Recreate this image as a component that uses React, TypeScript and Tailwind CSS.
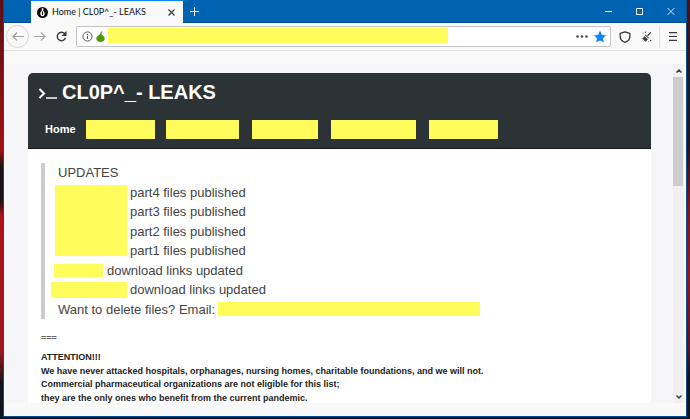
import { clsx } from 'clsx'

const navItems = [
  { label: 'Section 1', className: 'ml-[10px] w-[69px]' },
  { label: 'Section 2', className: 'ml-[11px] w-[73px]' },
  { label: 'Section 3', className: 'ml-[13px] w-[66px]' },
  { label: 'Section 4', className: 'ml-[13px] w-[85px]' },
  { label: 'Section 5', className: 'ml-[13px] w-[69px]' },
]

const parts = ['part4', 'part3', 'part2', 'part1']

const statement = [
  'ATTENTION!!!',
  'We have never attacked hospitals, orphanages, nursing homes, charitable foundations, and we will not.',
  'Commercial pharmaceutical organizations are not eligible for this list;',
  'they are the only ones who benefit from the current pandemic.',
]

function Redacted({ className }: { className: string }) {
  return <span className={clsx('block shrink-0 bg-[#fffc5c]', className)} />
}

function TitleBar() {
  return (
    <div className="flex h-[23px] shrink-0 items-stretch border-b border-[#004a8f] bg-[#0063b1] pl-[27px]">
      <div className="-mb-px flex w-[152px] items-center border-t border-[#0a84ff] bg-[#f9f9fa] pl-[6px] pr-[7px]">
        <svg className="size-[11px] shrink-0" viewBox="0 0 11 11" aria-hidden="true">
          <circle cx="5.5" cy="5.5" r="5.5" fill="#0c0c0d" />
          <path d="M4.7 1.300h1.600v2.600c1 .6 1.400 1.500 1.400 2.700C7.700 8.200 6.700 9.200 5.500 9.200S3.300 8.200 3.300 6.600c0-1.200.4-2.100 1.400-2.700z" fill="#fff" />
          <path d="M5.500 4.500v3.500" stroke="#0c0c0d" strokeWidth="1" />
        </svg>
        <span className="ml-1 flex-1 whitespace-nowrap font-[Lato,sans-serif] text-[9px] leading-[14px] text-[#0c0c0d]">
          Home | CL0P^_- LEAKS
        </span>
        <button type="button" aria-label="Close tab">
          <svg className="size-[9px]" viewBox="0 0 9 9" fill="none" stroke="#3a3a3e" strokeWidth="1.200">
            <path d="M1.500 1.500l6 6M7.500 1.500l-6 6" />
          </svg>
        </button>
      </div>
      <button type="button" aria-label="New tab" className="ml-[7px]">
        <svg className="size-[9px]" viewBox="0 0 9 9" fill="none" stroke="#fff">
          <path d="M4.500 0v9M0 4.500h9" />
        </svg>
      </button>
      <div className="ml-auto flex items-center gap-[23px] pr-[11px]">
        <button type="button" aria-label="Minimize">
          <svg className="size-2" viewBox="0 0 8 8" stroke="#fff">
            <path d="M0 4.500h7" />
          </svg>
        </button>
        <button type="button" aria-label="Maximize">
          <svg className="size-2" viewBox="0 0 8 8" fill="none" stroke="#fff">
            <path d="M.5 1.500h6v6h-6z" />
          </svg>
        </button>
        <button type="button" aria-label="Close">
          <svg className="size-2" viewBox="0 0 8 8" fill="none" stroke="#fff" strokeWidth=".8">
            <path d="M.5 1l7 7M7.500 1l-7 7" />
          </svg>
        </button>
      </div>
    </div>
  )
}

function Toolbar() {
  return (
    <div className="flex h-7 shrink-0 items-center border-b border-[#e0e0e1] bg-[#f9f9fa] pl-[2px]">
      <button type="button" aria-label="Back" className="flex size-[23px] items-center justify-center rounded-full border border-[#d4d4d5]">
        <svg className="h-[9px] w-[12px]" viewBox="0 0 12 9" fill="none" stroke="#a3a3a6" strokeWidth="1.200">
          <path d="M12 4.500H1M5 .5l-4 4 4 4" />
        </svg>
      </button>
      <button type="button" aria-label="Forward" className="ml-[5px]">
        <svg className="h-[9px] w-[12px]" viewBox="0 0 12 9" fill="none" stroke="#a3a3a6" strokeWidth="1.200">
          <path d="M0 4.500h11M7 .5l4 4-4 4" />
        </svg>
      </button>
      <button type="button" aria-label="Reload" className="ml-[10px]">
        <svg className="size-[11px]" viewBox="0 0 11 11" fill="none" stroke="#38383c" strokeWidth="1.400">
          <path d="M8.600 2.600A4.200 4.200 0 1 0 9.500 6.800" />
          <path d="M10.500 0v5h-5z" fill="#38383c" stroke="none" />
        </svg>
      </button>
      <div className="ml-[9px] flex h-[21px] min-w-0 flex-1 items-center rounded-xs border border-[#c4c4c6] bg-white pl-[5px] pr-1">
        <svg className="size-[11px] shrink-0" viewBox="0 0 11 11" fill="none" stroke="#59595d" aria-hidden="true">
          <circle cx="5.500" cy="5.500" r="4.600" />
          <path d="M5.500 4.800v3.200M5.500 2.700v1.200" strokeWidth="1.200" />
        </svg>
        <svg className="ml-[3px] h-[11px] w-[9px] shrink-0" viewBox="0 0 9 11" fill="#4e9a06" aria-hidden="true">
          <path d="M6.800.2C5.400.4 4.400 1.200 4 2.900 3.500 4.300.3 4.700.3 7.500.3 9.500 2.200 11 4.500 11s4.200-1.500 4.200-3.500C8.700 5 5.900 4.500 5.500 3c0-1 .5-1.700 1.300-2.800z" />
        </svg>
        <input
          type="text"
          readOnly
          aria-label="Address"
          className="ml-[3px] mt-px h-[15px] w-[340px] min-w-0 self-start bg-[#fffc5c] outline-none"
        />
        <button type="button" aria-label="Page actions" className="ml-auto">
          <svg className="h-[3px] w-[12px]" viewBox="0 0 12 3" fill="#4a4a4f">
            <circle cx="1.500" cy="1.500" r="1.300" />
            <circle cx="6" cy="1.500" r="1.300" />
            <circle cx="10.500" cy="1.500" r="1.300" />
          </svg>
        </button>
        <button type="button" aria-label="Bookmark" className="ml-[6px]">
          <svg className="size-[12px]" viewBox="0 0 12 12" fill="#0a84ff">
            <path d="M6 .3l1.700 3.600 4 .5-2.900 2.700.7 4L6 9.200l-3.500 1.900.7-4L.3 4.400l4-.5z" stroke="#0a84ff" strokeWidth=".4" strokeLinejoin="round" />
          </svg>
        </button>
      </div>
      <button type="button" aria-label="Security level" className="ml-2">
        <svg className="size-[12px]" viewBox="0 0 12 12" fill="none" stroke="#38383c" strokeWidth="1.300" strokeLinejoin="round">
          <path d="M6 .8l4.800 1.500v3.200c0 2.700-1.900 4.800-4.800 5.800C3.100 10.300 1.200 8.200 1.200 5.500V2.300z" />
        </svg>
      </button>
      <button type="button" aria-label="New identity" className="ml-[9px]">
        <svg className="size-[12px]" viewBox="0 0 12 12" fill="#38383c">
          <path d="M10.600.7l.7.700L8 5.200l-.9-.8z" />
          <path d="M5.500 3.600l3.600 3.300-.6.700L4.900 4.300z" />
          <path d="M4.300 4.900l3.600 3.300c-.6 1.200-1.700 2.200-3.100 2.700l.6-1.700-1.600 1.100.5-1.800-1.800.8 1-1.500-2.600.2C2.700 7.500 3.900 6.400 4.300 4.900z" />
          <circle cx="3.200" cy="2" r=".6" />
          <circle cx="5.600" cy="1.200" r=".6" />
          <circle cx="10.600" cy="9.600" r=".8" />
          <circle cx="8.800" cy="10.500" r=".4" />
        </svg>
      </button>
      <div className="ml-[7px] h-[22px] w-px bg-[#e0e0e1]" />
      <button type="button" aria-label="Menu" className="ml-[9px] mr-[9px]">
        <svg className="h-[9px] w-2" viewBox="0 0 8 9" stroke="#38383c" strokeWidth="1.200">
          <path d="M0 .6h8M0 4.500h8M0 8.400h8" />
        </svg>
      </button>
    </div>
  )
}

function SiteHeader() {
  return (
    <header className="rounded-t-[5px] border-b border-[#15191b] bg-[#2b3336] pb-[9px] pl-[10px] pt-[7px] text-white">
      <h1 className="flex items-center gap-[5px] whitespace-nowrap text-[20px] font-bold leading-6">
        <svg className="h-[14px] w-[19px] shrink-0" viewBox="0 0 19 14" fill="none" stroke="#fff" strokeWidth="2" aria-hidden="true">
          <path d="M1.500 4l4.500 4.500L1.500 13" />
          <path d="M8 13h11" strokeWidth="1.500" />
        </svg>
        CL0P^_- LEAKS
      </h1>
      <nav className="mt-4 flex h-[19px] items-center pl-[7px]">
        <a href="#home" className="text-[11px] font-bold leading-[21px]">
          Home
        </a>
        {navItems.map((item) => (
          <a
            key={item.label}
            href="#section"
            aria-label={item.label}
            className={clsx('h-[19px] bg-[#fffc5c]', item.className)}
          />
        ))}
      </nav>
    </header>
  )
}

function Updates() {
  return (
    <blockquote className="grid min-h-[156px] border-l-4 border-[#ccc] pl-[6px] text-[13px] leading-[19px] text-[#444]">
      <p className="pl-[7px]">UPDATES</p>
      <div className="row-span-4 flex gap-[3px] pl-1">
        <Redacted className="mb-[5px] mt-[2px] w-[72px]" />
        <ul className="grid">
          {parts.map((part) => (
            <li key={part}>{part} files published</li>
          ))}
        </ul>
      </div>
      <p className="flex items-center gap-1 pl-[3px]">
        <Redacted className="h-[13px] w-[49px]" />
        download links updated
      </p>
      <p className="flex items-center gap-[3px]">
        <Redacted className="h-4 w-[76px]" />
        download links updated
      </p>
      <p className="flex items-center gap-[3px] pl-[7px]">
        Want to delete files? Email:
        <Redacted className="h-[14px] w-[262px]" />
      </p>
    </blockquote>
  )
}

function Scrollbar() {
  return (
    <div className="mr-[2px] flex w-[11px] shrink-0 flex-col bg-[#f0f0f0]">
      <button type="button" aria-label="Scroll up" className="flex h-[13px] items-center justify-center">
        <svg className="h-1 w-[6px]" viewBox="0 0 6 4" fill="none" stroke="#404040" strokeWidth="1.500">
          <path d="M.5 3.500L3 1l2.500 2.500" />
        </svg>
      </button>
      <div className="mr-px h-[109px] bg-[#cdcdcd]" />
      <button type="button" aria-label="Scroll down" className="mt-auto flex h-[12px] items-center justify-center">
        <svg className="h-1 w-[6px]" viewBox="0 0 6 4" fill="none" stroke="#404040" strokeWidth="1.500">
          <path d="M.5.5L3 3 5.500.5" />
        </svg>
      </button>
    </div>
  )
}

export default function App() {
  return (
    <div className="flex h-screen flex-col bg-[#10141c] font-['Liberation_Sans',Arial,sans-serif]">
      <div className="flex min-h-0 flex-1">
        <div className="w-[3px] shrink-0 bg-[linear-gradient(#5c1214,#a01214_36%,#1a1214_40%,#1a1214_48%,#b01418_52%,#a01820_84%,#10141c_92%)]" />
        <div className="flex min-w-0 flex-1 flex-col border-x border-b border-[#0a4a86] bg-[#f9f9fa]">
          <TitleBar />
          <Toolbar />
          <div className="mb-[13px] mt-[13px] flex min-h-0 flex-1 pl-[2px]">
            <main className="min-w-0 flex-1 overflow-hidden bg-[#f6f6f9] pl-[22px] pr-[22px] pt-[9px]">
              <SiteHeader />
              <div className="bg-white px-[13px] pt-[14px]">
                <Updates />
                <p className="mt-3 text-[9px] font-bold leading-[14px] text-[#666]">===</p>
                <div className="mt-[6px] grid min-h-[54px] text-[9px] font-bold leading-[13px] text-[#222]">
                  {statement.map((line) => (
                    <p key={line}>{line}</p>
                  ))}
                </div>
              </div>
            </main>
            <Scrollbar />
          </div>
        </div>
        <div className="w-[3px] shrink-0 bg-[linear-gradient(#4a1218,#3a1218_14%,#141c2c_20%,#2a1218_34%,#8c1214_50%,#a01218_66%,#5c1220_84%,#10141c_90%)]" />
      </div>
      <div className="h-[2px] shrink-0" />
    </div>
  )
}
